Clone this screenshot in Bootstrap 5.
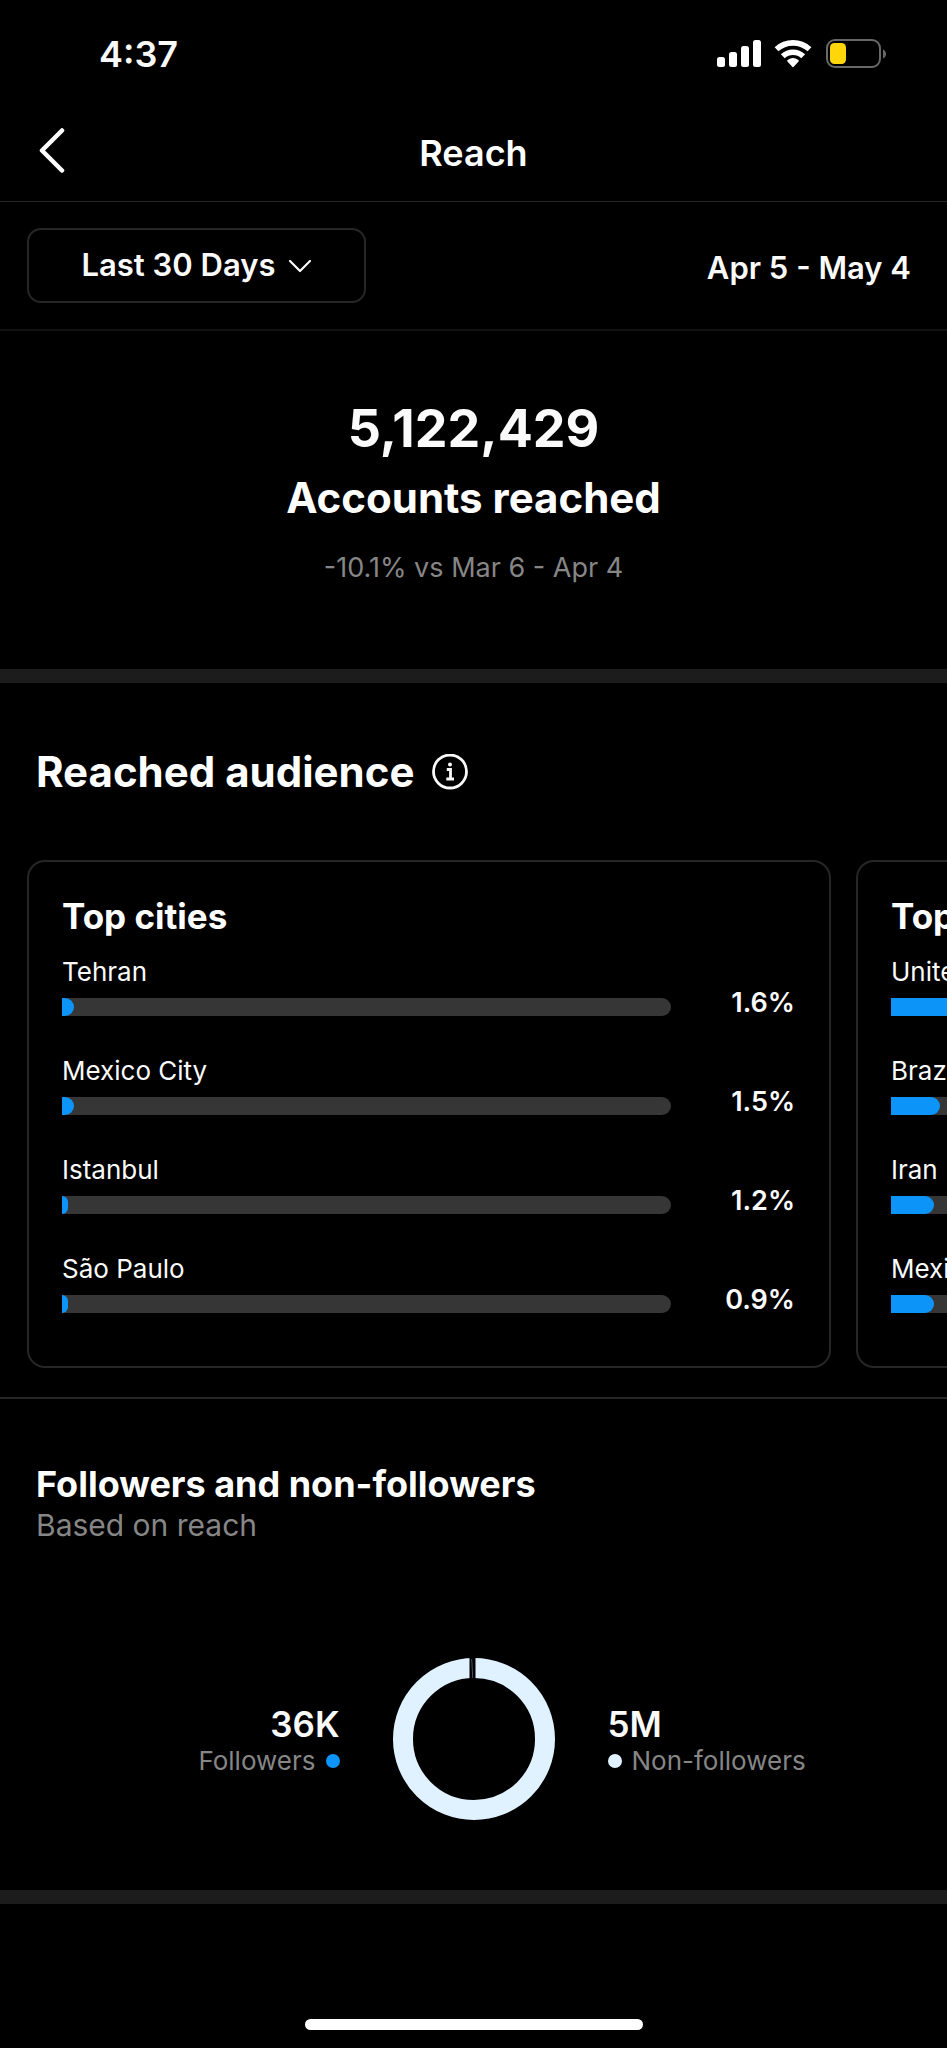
<!DOCTYPE html>
<html lang="en" data-bs-theme="dark">
<head>
<meta charset="utf-8">
<meta name="viewport" content="width=device-width, initial-scale=1">
<title>Reach</title>
<link href="https://cdn.jsdelivr.net/npm/bootstrap@5.3.0/dist/css/bootstrap.min.css" rel="stylesheet">
<style>
  :root { --line: #262626; --soft: #1c1c1c; --muted: #868686; --accent: #0c94f9; --pale: #e0f1ff; --track: #363636; }
  body { background: #000; color: #fafafa; font-family: Inter, "Liberation Sans", sans-serif; font-size: 26px; line-height: 36px; }
  h1, h2, h3, p { margin: 0; }
  svg { display: block; flex: none; }
  .status-bar { height: 107px; padding: 0 60px 0 99px; }
  .clock { font-size: 36px; font-weight: 600; }
  .title-bar { height: 95px; padding: 0 36px 2px; border-bottom: 1px solid var(--line); grid-template-columns: 1fr auto 1fr; }
  .title-bar h1 { font-size: 36px; font-weight: 600; line-height: 42px; }
  .back-link { width: 32px; color: #fff; }
  .filter-bar { padding: 26px 36px 26px 27px; border-bottom: 2px solid #121212; }
  .range-btn { width: 339px; height: 75px; border: 2px solid var(--line); border-radius: 14px; color: #fafafa; gap: 12px; }
  .range-btn, .range-dates { font-size: 31px; font-weight: 600; }
  .hero { padding: 63px 16px 83px; }
  .hero-number { font-size: 52px; font-weight: 700; line-height: 70px; }
  .hero h2, .section-title { font-size: 42px; font-weight: 700; line-height: 68px; }
  .hero p { margin-top: 18px; font-size: 27px; }
  .dim { color: var(--muted); }
  .band { height: 14px; background: var(--soft); }
  .audience { padding: 64px 0 29px; border-bottom: 2px solid var(--line); }
  .audience-head { padding: 0 36px; gap: 18px; margin-bottom: 63px; }
  .section-title.tight { line-height: 50px; }
  .cards { padding-left: 27px; gap: 25px; overflow-x: auto; scrollbar-width: none; }
  .cards::-webkit-scrollbar { display: none; }
  .place-card { flex: 0 0 auto; width: calc(100vw - 143px); border: 2px solid var(--line); border-radius: 18px; padding: 34px 34px 53px 33px; }
  .place-card h3 { font-size: 35px; font-weight: 700; line-height: 40px; margin-bottom: 19px; }
  .place-list { gap: 38px; }
  .place-list.bars-only { padding-right: 124px; }
  .place-label { line-height: 34px; margin-bottom: 9px; }
  .place-list .progress { height: 18px; background: var(--track); border-radius: 0 9px 9px 0; }
  .place-list .progress-bar { background: var(--accent); border-radius: 0 9px 9px 0; }
  .share { width: 124px; font-size: 27px; font-weight: 600; line-height: 26px; }
  .follow { padding: 64px 36px 70px; }
  .follow h2 { font-size: 36px; font-weight: 700; line-height: 42px; }
  .sub { font-size: 30px; line-height: 40px; }
  .split { display: grid; grid-template-columns: 1fr 162px 1fr; gap: 53px; margin-top: 113px; }
  .split-item { padding-top: 6px; }
  .split-value { font-size: 35px; font-weight: 600; line-height: 38px; }
  .split-label { gap: 10px; }
  .dot { width: 14px; height: 14px; border-radius: 50%; flex: none; }
  .home-bar { width: 338px; height: 11px; border-radius: 6px; background: #fff; margin-bottom: 18px; }
</style>
</head>
<body>
<div class="d-flex flex-column min-vh-100">
  <div class="status-bar d-flex justify-content-between align-items-center">
    <span class="clock">4:37</span>
    <svg width="170" height="30" viewBox="0 0 170 30" role="img" aria-label="Signal, Wi-Fi, battery low">
      <g fill="#fff">
        <rect x="0" y="18" width="8" height="10" rx="2.5"/>
        <rect x="12" y="13" width="8" height="15" rx="2.5"/>
        <rect x="24" y="7" width="8" height="21" rx="2.5"/>
        <rect x="36" y="1" width="8" height="27" rx="2.5"/>
        <path d="M76 28.500l-5.600-6.100q-.6-.8.200-1.400a9 9 0 0 1 10.800 0q.8.600.2 1.400z"/>
      </g>
      <g fill="none" stroke="#fff" stroke-width="5.600">
        <path d="M65.800 17.200a15 15 0 0 1 20.400 0"/>
        <path d="M59.500 10.300a24.500 24.500 0 0 1 33 0"/>
      </g>
      <rect x="110" y="1" width="53" height="27" rx="8" fill="none" stroke="#686868" stroke-width="2"/>
      <rect x="113" y="4" width="16" height="21" rx="4.500" fill="#ffd60a"/>
      <path d="M166 10.500v9q3-1.500 3-4.500t-3-4.500z" fill="#686868"/>
    </svg>
  </div>

  <header class="title-bar d-grid align-items-center">
    <a class="back-link" href="#" aria-label="Back">
      <svg width="32" height="50" viewBox="0 0 32 50" fill="none" stroke="currentColor" stroke-width="4.500" stroke-linecap="round" stroke-linejoin="round"><path d="M26 1.500 6 21.500l20 20" transform="translate(0 1)"/></svg>
    </a>
    <h1>Reach</h1>
  </header>

  <div class="filter-bar d-flex justify-content-between align-items-center">
    <button type="button" class="range-btn btn d-flex align-items-center justify-content-center p-0">
      Last 30 Days
      <svg width="24" height="14" viewBox="0 0 24 14" fill="none" stroke="currentColor" stroke-width="2.200" stroke-linecap="round" stroke-linejoin="round"><path d="M2 2l10 10L22 2"/></svg>
    </button>
    <span class="range-dates pt-1">Apr 5 - May 4</span>
  </div>

  <main>
    <section class="hero text-center">
      <div class="hero-number">5,122,429</div>
      <h2>Accounts reached</h2>
      <p class="dim">-10.1% vs Mar 6 - Apr 4</p>
    </section>
    <div class="band"></div>

    <section class="audience">
      <div class="audience-head d-flex align-items-center">
        <h2 class="section-title tight">Reached audience</h2>
        <svg width="36" height="36" viewBox="0 0 36 36" fill="none" stroke="#fafafa" role="img" aria-label="About reached audience">
          <circle cx="18" cy="17.500" r="16.500" stroke-width="2.800"/>
          <path d="M14.800 15.500H18.500V25M14.300 25H22" stroke-width="2.800"/>
          <circle cx="18" cy="10.500" r="2" fill="#fafafa" stroke="none"/>
        </svg>
      </div>
      <div class="cards d-flex">
        <article class="place-card">
          <h3>Top cities</h3>
          <div class="place-list d-flex flex-column">
            <div class="d-flex align-items-end">
              <div class="flex-grow-1"><div class="place-label">Tehran</div><div class="progress"><div class="progress-bar" style="width:2%"></div></div></div>
              <div class="share text-end">1.6%</div>
            </div>
            <div class="d-flex align-items-end">
              <div class="flex-grow-1"><div class="place-label">Mexico City</div><div class="progress"><div class="progress-bar" style="width:2%"></div></div></div>
              <div class="share text-end">1.5%</div>
            </div>
            <div class="d-flex align-items-end">
              <div class="flex-grow-1"><div class="place-label">Istanbul</div><div class="progress"><div class="progress-bar" style="width:1%"></div></div></div>
              <div class="share text-end">1.2%</div>
            </div>
            <div class="d-flex align-items-end">
              <div class="flex-grow-1"><div class="place-label">São Paulo</div><div class="progress"><div class="progress-bar" style="width:1%"></div></div></div>
              <div class="share text-end">0.9%</div>
            </div>
          </div>
        </article>
        <article class="place-card">
          <h3>Top countries</h3>
          <div class="place-list bars-only d-flex flex-column">
            <div><div class="place-label">United States</div><div class="progress"><div class="progress-bar" style="width:20%"></div></div></div>
            <div><div class="place-label">Brazil</div><div class="progress"><div class="progress-bar" style="width:8%"></div></div></div>
            <div><div class="place-label">Iran</div><div class="progress"><div class="progress-bar" style="width:7%"></div></div></div>
            <div><div class="place-label">Mexico</div><div class="progress"><div class="progress-bar" style="width:7%"></div></div></div>
          </div>
        </article>
      </div>
    </section>

    <section class="follow">
      <h2>Followers and non-followers</h2>
      <p class="sub dim">Based on reach</p>
      <div class="split align-items-center">
        <div class="split-item text-end">
          <div class="split-value">36K</div>
          <div class="split-label d-flex align-items-center justify-content-end dim">Followers<span class="dot" style="background:var(--accent)"></span></div>
        </div>
        <svg width="162" height="162" viewBox="0 0 162 162" role="img" aria-label="36K followers, 5M non-followers">
          <circle cx="81" cy="81" r="71" fill="none" stroke="#e0f1ff" stroke-width="20"/>
          <path d="M76.500 0h6v21h-6z" fill="#000"/>
          <path d="M78.700 1 79.700 20" stroke="#43566b" stroke-width="1"/>
        </svg>
        <div class="split-item">
          <div class="split-value">5M</div>
          <div class="split-label d-flex align-items-center dim"><span class="dot" style="background:var(--pale)"></span>Non-followers</div>
        </div>
      </div>
    </section>
    <div class="band"></div>
  </main>
  <div class="home-bar mt-auto mx-auto"></div>
</div>
<script src="https://cdn.jsdelivr.net/npm/bootstrap@5.3.0/dist/js/bootstrap.bundle.min.js"></script>
</body>
</html>
